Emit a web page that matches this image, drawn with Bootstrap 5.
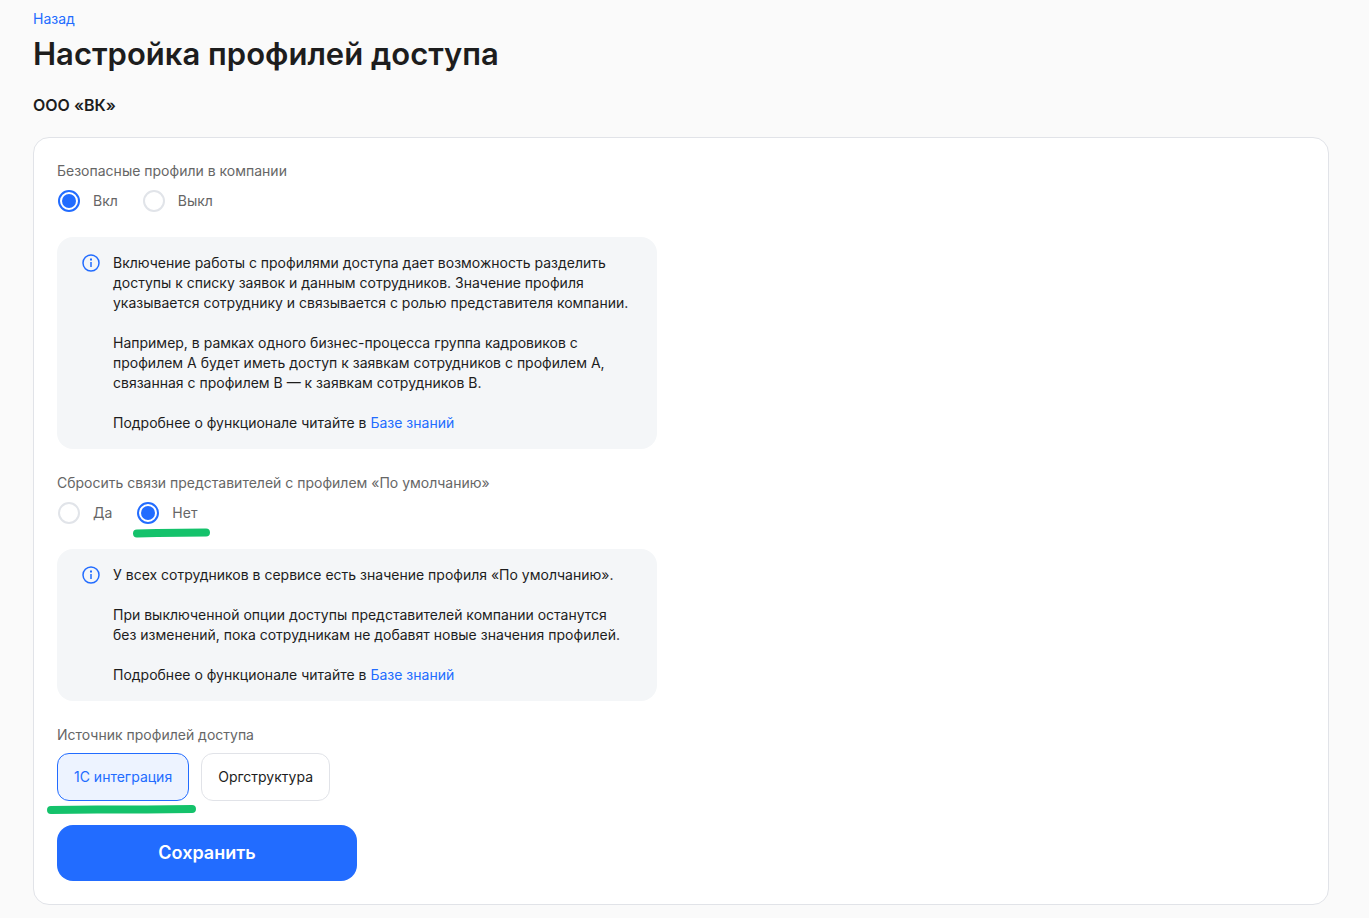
<!DOCTYPE html>
<html lang="ru">
<head>
<meta charset="utf-8">
<meta name="viewport" content="width=device-width, initial-scale=1">
<title>Настройка профилей доступа</title>
<link href="https://cdn.jsdelivr.net/npm/bootstrap@5.3.0/dist/css/bootstrap.min.css" rel="stylesheet">
<style>
body { background: #fafafa; color: #1d1d1d; font-family: Inter, "Liberation Sans", sans-serif; font-size: 14px; line-height: 20px; }
a { color: #226cff; text-decoration: none; }
.page { padding: 9px 40px 12px 33px; }
.page-title { font-size: 31px; line-height: 40px; font-weight: 600; margin: 5px 0 0; }
.company { font-size: 16px; line-height: 24px; font-weight: 600; margin: 19px 0 20px; }
.panel { border: 1px solid #e1e3e8; border-radius: 16px; padding: 23px; }
.caption { color: #666; font-size: 14px; line-height: 20px; margin: 0 0 8px; float: none; }
.choices { gap: 24px; }
.choice { position: relative; display: flex; align-items: center; gap: 12px; height: 24px; color: #666; }
.choice .form-check-input { width: 22px; height: 22px; margin: 0 1px; padding: 2px; border: 2px solid #e1e4e9; background: #fff; }
.choice .form-check-input:checked { border-color: #226cff; background: #226cff content-box; }
.note { max-width: 600px; margin: 24px 0; padding: 16px 24px; border-radius: 16px; background: #f4f6f8; }
.note p { margin: 0 0 20px; }
.note p:last-child { margin: 0; }
.source { position: relative; gap: 12px; }
.source .btn { height: 48px; padding: 0 16px; border-radius: 12px; font-size: 14px; line-height: 20px; border: 1px solid #e1e3e8; background: #fff; color: #1d1d1d; }
.source .btn.active { border-color: #226cff; background: #edf3ff; color: #226cff; }
.save { width: 300px; height: 56px; margin-top: 24px; border: 0; border-radius: 16px; background: #226cff; font-size: 18px; line-height: 24px; font-weight: 600; }
.marker { position: absolute; height: 10px; fill: none; stroke: #14c26b; stroke-width: 8; stroke-linecap: round; pointer-events: none; }
.marker-radio { left: -4px; top: 27px; width: 78px; }
.marker-source { left: -10px; top: 51px; width: 149px; }
</style>
</head>
<body>
<main class="page">
  <a href="#" class="d-block">Назад</a>
  <h1 class="page-title">Настройка профилей доступа</h1>
  <h2 class="company">ООО «ВК»</h2>
  <form class="panel bg-white">
    <fieldset>
      <legend class="caption">Безопасные профили в компании</legend>
      <div class="d-flex choices">
        <label class="choice"><input class="form-check-input" type="radio" name="safe" checked>Вкл</label>
        <label class="choice"><input class="form-check-input" type="radio" name="safe">Выкл</label>
      </div>
    </fieldset>
    <div class="note d-flex gap-2">
      <svg class="flex-shrink-0" width="24" height="20" viewBox="0 0 24 20" fill="none" stroke="#226cff" stroke-width="1.5" aria-hidden="true"><circle cx="10" cy="10" r="8"/><path d="M10 9v5"/><path d="M9 5.500h2v2h-2z" fill="#226cff" stroke="none"/></svg>
      <div>
        <p>Включение работы с профилями доступа дает возможность разделить<br>доступы к списку заявок и данным сотрудников. Значение профиля<br>указывается сотруднику и связывается с ролью представителя компании.</p>
        <p>Например, в рамках одного бизнес-процесса группа кадровиков с<br>профилем А будет иметь доступ к заявкам сотрудников с профилем А,<br>связанная с профилем B — к заявкам сотрудников B.</p>
        <p>Подробнее о функционале читайте в <a href="#">Базе знаний</a></p>
      </div>
    </div>
    <fieldset>
      <legend class="caption">Сбросить связи представителей с профилем «По умолчанию»</legend>
      <div class="d-flex choices">
        <label class="choice"><input class="form-check-input" type="radio" name="reset">Да</label>
        <label class="choice"><input class="form-check-input" type="radio" name="reset" checked>Нет
          <svg class="marker marker-radio" viewBox="0 0 78 10" aria-hidden="true"><path d="M5 5.500L25 5L74 4.500"/></svg></label>
      </div>
    </fieldset>
    <div class="note d-flex gap-2">
      <svg class="flex-shrink-0" width="24" height="20" viewBox="0 0 24 20" fill="none" stroke="#226cff" stroke-width="1.5" aria-hidden="true"><circle cx="10" cy="10" r="8"/><path d="M10 9v5"/><path d="M9 5.500h2v2h-2z" fill="#226cff" stroke="none"/></svg>
      <div>
        <p>У всех сотрудников в сервисе есть значение профиля «По умолчанию».</p>
        <p>При выключенной опции доступы представителей компании останутся<br>без изменений, пока сотрудникам не добавят новые значения профилей.</p>
        <p>Подробнее о функционале читайте в <a href="#">Базе знаний</a></p>
      </div>
    </div>
    <fieldset>
      <legend class="caption">Источник профилей доступа</legend>
      <div class="source d-flex">
        <button type="button" class="btn active">1С интеграция</button>
        <button type="button" class="btn">Оргструктура</button>
        <svg class="marker marker-source" viewBox="0 0 149 10" aria-hidden="true"><path d="M4 6L50 5.500L100 5.500L145 5"/></svg>
      </div>
    </fieldset>
    <button type="submit" class="btn btn-primary save">Сохранить</button>
  </form>
</main>
<script src="https://cdn.jsdelivr.net/npm/bootstrap@5.3.0/dist/js/bootstrap.bundle.min.js"></script>
</body>
</html>
